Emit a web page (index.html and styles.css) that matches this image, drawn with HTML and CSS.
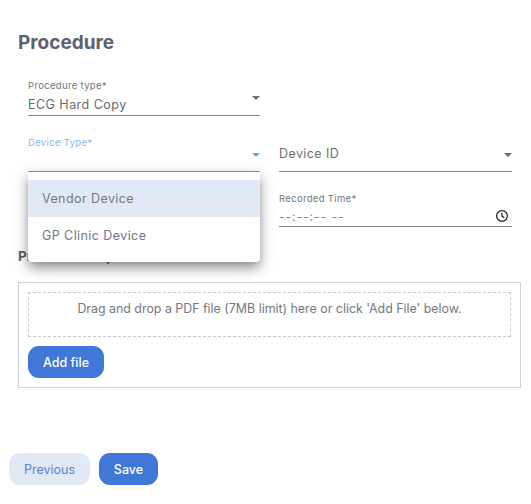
FILE: index.html
```html
<!DOCTYPE html>
<html lang="en">
<head>
<meta charset="utf-8">
<title>Procedure</title>
<link rel="stylesheet" href="styles.css">
</head>
<body>
<main class="page">
  <h1 class="title">Procedure</h1>
  <div class="fields">
    <div class="field">
      <label class="label">Procedure type*</label>
      <div class="control tall"><span class="value">ECG Hard Copy</span><span class="arrow"></span></div>
    </div>
    <div class="field-spacer"></div>
    <div class="field focused">
      <label class="label">Device Type*</label>
      <div class="control"><span class="value"></span><span class="arrow"></span></div>
      <ul class="menu">
        <li class="option selected">Vendor Device</li>
        <li class="option">GP Clinic Device</li>
      </ul>
    </div>
    <div class="field">
      <label class="label"></label>
      <div class="control"><span class="placeholder">Device ID</span><span class="arrow"></span></div>
    </div>
    <div class="field">
      <div class="control short hidden-date"></div>
    </div>
    <div class="field">
      <label class="label">Recorded Time*</label>
      <div class="control short"><span class="value time">--:--:-- --</span>
        <svg class="clock" viewBox="0 0 12 12" aria-hidden="true"><circle cx="6" cy="6" r="4.6"/><path d="M6 3.2V6.2L8 7.4"/></svg>
      </div>
    </div>
  </div>
  <h2 class="subtitle">Procedure Report</h2>
  <section class="upload">
    <div class="drop">Drag and drop a PDF file (7MB limit) here or click 'Add File' below.</div>
    <button class="btn primary add">Add file</button>
  </section>
  <div class="actions">
    <button class="btn secondary">Previous</button>
    <button class="btn primary">Save</button>
  </div>
</main>
</body>
</html>
```
FILE: styles.css
```css
* { box-sizing: border-box; }
html, body { margin: 0; height: 100%; background: #fff; }
body { font-family: Inter, "Liberation Sans", sans-serif; color: #5f6368; overflow: hidden; }
.page { padding: 32px 10px 0 18px; position: relative; }
.title { margin: 0; font-size: 19px; line-height: 22px; font-weight: 700; color: #5b6270; }
.fields { display: grid; grid-template-columns: 232px 233px; grid-template-rows: 57px 56px 56px; column-gap: 19px; margin: 24px 0 0 10px; }
.field { position: relative; padding-top: 1px; display: flex; flex-direction: column; }
.label { font-size: 9.5px; line-height: 14px; height: 14px; letter-spacing: .33px; color: #767676; }
.control { height: 22px; border-bottom: 1px solid #858585; display: flex; align-items: center; justify-content: space-between; font-size: 12.5px; letter-spacing: .47px; color: #666a70; }
.control.tall { height: 23px; }
.control.short { height: 21px; }
.hidden-date { margin-top: 14px; }
.arrow { align-self: flex-start; width: 0; height: 0; margin-top: 3px; border-left: 4.5px solid transparent; border-right: 4.5px solid transparent; border-top: 4.5px solid #6f6f6f; }
.focused .label { color: #8ab6ef; }
.focused .control { border-bottom-color: #5c9fe6; }
.focused .arrow { border-top-color: #5ea5ec; }
.placeholder { align-self: flex-start; margin-top: -3px; font-size: 12.5px; line-height: 14px; letter-spacing: .42px; color: #6b6f76; }
.time { color: #8a8a8a; letter-spacing: .8px; }
.clock { width: 14px; height: 14px; margin-right: 3px; fill: none; stroke: #222; stroke-width: 1.1; }
.menu { position: absolute; z-index: 2; left: 0; top: 37px; width: 232px; height: 90px; margin: 0; padding: 8px 0; list-style: none; background: #fff; border-radius: 0 0 4px 4px; box-shadow: 0 5px 8px -3px rgba(0,0,0,.3), 0 8px 12px 1px rgba(0,0,0,.16), 0 3px 16px 2px rgba(0,0,0,.14); }
.option { height: 37px; padding: 0 14px; display: flex; align-items: center; font-size: 12.5px; letter-spacing: .42px; color: #737785; }
.selected { background: #e2e9f6; }
.subtitle { margin: 0; font-size: 13.5px; line-height: 18px; font-weight: 700; color: #5b6270; }
.upload { margin-top: 17px; width: 503px; height: 106px; border: 1px solid #d0d0d6; padding: 9px; }
.drop { height: 45px; border: 1px dashed #c8c8c8; padding-top: 7px; text-align: center; font-size: 12.4px; line-height: 17px; color: #73777e; }
.btn { font-family: inherit; border: 0; font-size: 12.5px; font-weight: 500; border-radius: 11px; height: 32px; padding: 0; }
.primary { background: #3f78d6; color: #fff; }
.secondary { background: #e2e9f6; color: #5b82d6; font-weight: 400; }
.add { display: block; margin-top: 9px; width: 76px; }
.actions { display: flex; gap: 9px; margin: 65px 0 0 -9px; }
.actions .secondary { width: 81px; }
.actions .primary { width: 59px; }
```
